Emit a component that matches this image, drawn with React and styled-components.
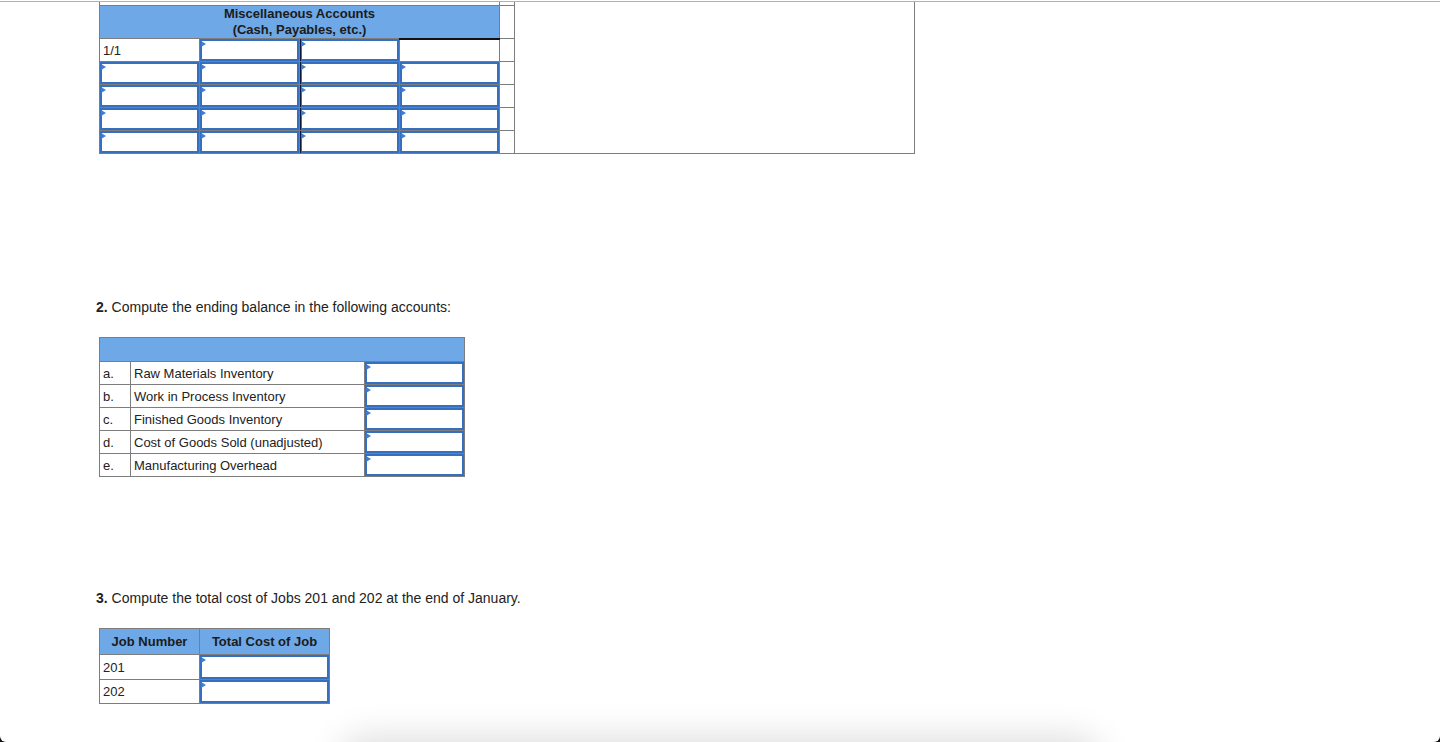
import React from 'react'
import styled, { createGlobalStyle } from 'styled-components'

const GlobalStyle = createGlobalStyle`
  html, body {
    margin: 0;
    background: #fff;
  }
  body {
    font-family: "Liberation Sans", Arial, sans-serif;
    color: #222;
  }
`

const Wrapper = styled.div`
  position: relative;
  min-height: 742px;
  overflow: hidden;
`

const TopRule = styled.div`
  height: 1px;
  margin-top: 1px;
  background: #b1b1b1;
`

const Content = styled.div`
  padding-left: 96px;
`

const Grid = styled.table`
  border-collapse: collapse;
  table-layout: fixed;
  margin-left: 3px;
  font-size: 13px;
  width: ${props => props.width}px;
  margin-top: ${props => props.top || 0}px;

  td, th {
    border: 1px solid #7d7d7d;
    padding: 0 3px;
    box-sizing: border-box;
  }
`

const Head = styled.th`
  background: #6ea8e6;
  color: #1b1b1b;
  font-weight: bold;
  text-align: center;
  line-height: 16px;
  height: ${props => props.h}px;
`

const Cell = styled.td`
  height: ${props => props.h || 23}px;
  line-height: 15px;
  vertical-align: middle;
  color: #222;
  ${props => props.open ? 'border-top: none !important;' : ''}
  ${props => props.darkTop ? 'border-top: 2px solid #111 !important;' : ''}
`

const InputCell = styled(Cell)`
  position: relative;
  box-shadow: ${props => props.dark
    ? 'inset 1px 0 0 #0d1836, inset 0 0 0 2px #3470bf'
    : 'inset 0 0 0 2px #3470bf'};
  ${props => props.dark ? 'border-left-color: #0d1836 !important;' : ''}

  &::before {
    content: "";
    position: absolute;
    top: 2px;
    left: 1px;
    border-left: 5px solid #3d7dd3;
    border-top: 3px solid transparent;
    border-bottom: 3px solid transparent;
  }
`

const Prompt = styled.p`
  margin: ${props => props.top}px 0 0;
  font-size: 14px;
  line-height: 16px;
  color: #222;

  b {
    font-weight: bold;
  }
`

const ShadowBar = styled.div`
  position: absolute;
  left: 345px;
  width: 750px;
  bottom: -40px;
  height: 40px;
  border-radius: 20px;
  box-shadow: 0 0 34px 6px rgba(0, 0, 0, 0.13);
`

const Frame = styled.div`
  position: absolute;
  inset: 0;
  pointer-events: none;
  border-radius: 0 0 6px 6px;
  box-shadow: 0 0 0 8px #111;
`

const balances = [
  ['a.', 'Raw Materials Inventory'],
  ['b.', 'Work in Process Inventory'],
  ['c.', 'Finished Goods Inventory'],
  ['d.', 'Cost of Goods Sold (unadjusted)'],
  ['e.', 'Manufacturing Overhead'],
]

function App() {
  return (
    <Wrapper>
      <GlobalStyle />
      <TopRule />
      <Content>
        <Grid width={815}>
          <colgroup>
            <col style={{ width: 100 }} />
            <col style={{ width: 100 }} />
            <col style={{ width: 100 }} />
            <col style={{ width: 100 }} />
            <col style={{ width: 15 }} />
            <col style={{ width: 400 }} />
          </colgroup>
          <tbody>
            <tr>
              <Cell colSpan={4} h={3} open />
              <Cell h={3} open />
              <Cell rowSpan={7} open />
            </tr>
            <tr>
              <Head colSpan={4} h={33}>
                Miscellaneous Accounts<br />(Cash, Payables, etc.)
              </Head>
              <Cell h={33} />
            </tr>
            <tr>
              <Cell>1/1</Cell>
              <InputCell />
              <InputCell dark />
              <Cell darkTop />
              <Cell />
            </tr>
            {[0, 1, 2, 3].map(i => (
              <tr key={i}>
                <InputCell />
                <InputCell />
                <InputCell dark />
                <InputCell />
                <Cell />
              </tr>
            ))}
          </tbody>
        </Grid>

        <Prompt top={145}>
          <b>2.</b> Compute the ending balance in the following accounts:
        </Prompt>

        <Grid width={365} top={22}>
          <colgroup>
            <col style={{ width: 31 }} />
            <col style={{ width: 234 }} />
            <col style={{ width: 100 }} />
          </colgroup>
          <tbody>
            <tr>
              <Head colSpan={3} h={24} />
            </tr>
            {balances.map(([letter, label]) => (
              <tr key={letter}>
                <Cell>{letter}</Cell>
                <Cell>{label}</Cell>
                <InputCell />
              </tr>
            ))}
          </tbody>
        </Grid>

        <Prompt top={113}>
          <b>3.</b> Compute the total cost of Jobs 201 and 202 at the end of January.
        </Prompt>

        <Grid width={230} top={22}>
          <colgroup>
            <col style={{ width: 100 }} />
            <col style={{ width: 130 }} />
          </colgroup>
          <tbody>
            <tr>
              <Head h={26}>Job Number</Head>
              <Head h={26}>Total Cost of Job</Head>
            </tr>
            <tr>
              <Cell h={25}>201</Cell>
              <InputCell h={25} />
            </tr>
            <tr>
              <Cell h={24}>202</Cell>
              <InputCell h={24} />
            </tr>
          </tbody>
        </Grid>
      </Content>
      <ShadowBar />
      <Frame />
    </Wrapper>
  )
}

export default App
